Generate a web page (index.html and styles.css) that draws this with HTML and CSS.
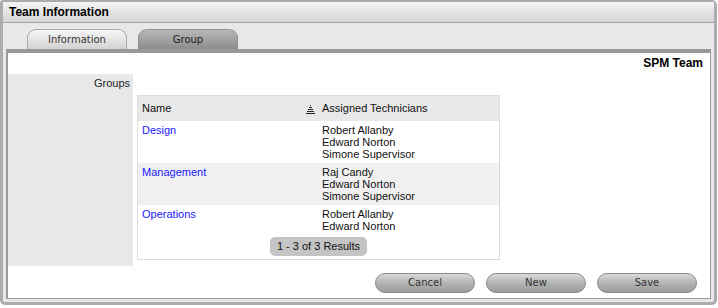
FILE: index.html
```html
<!DOCTYPE html>
<html>
<head>
<meta charset="utf-8">
<link rel="stylesheet" href="styles.css">
</head>
<body>
<div class="panel">
  <div class="panel-head">Team Information</div>
  <div class="panel-body">
    <div class="tabs">
      <div class="tab">Information</div>
      <div class="tab active">Group</div>
    </div>
    <div class="content">
      <div class="title-row">SPM Team</div>
      <div class="form">
        <div class="label-col">Groups</div>
        <div class="value-col">
          <table class="grid">
            <thead>
              <tr>
                <th class="c1"><span>Name</span>
                  <svg class="sort" width="9" height="10" viewBox="0 0 9 10"><g fill="#222"><rect x="4" y="1" width="1" height="1"/><rect x="3" y="3" width="3" height="1"/><rect x="2" y="5" width="5" height="1"/><rect x="1" y="7" width="7" height="1"/><rect x="0" y="9" width="9" height="1"/></g></svg>
                </th>
                <th class="c2">Assigned Technicians</th>
              </tr>
            </thead>
            <tbody>
              <tr>
                <td><a href="#">Design</a></td>
                <td>Robert Allanby<br>Edward Norton<br>Simone Supervisor</td>
              </tr>
              <tr class="alt">
                <td><a href="#">Management</a></td>
                <td>Raj Candy<br>Edward Norton<br>Simone Supervisor</td>
              </tr>
              <tr>
                <td><a href="#">Operations</a></td>
                <td>Robert Allanby<br>Edward Norton</td>
              </tr>
              <tr>
                <td colspan="2" class="pager-cell"><span class="pager">1 - 3 of 3 Results</span></td>
              </tr>
            </tbody>
          </table>
        </div>
      </div>
      <div class="buttons">
        <button class="btn">Cancel</button>
        <button class="btn">New</button>
        <button class="btn">Save</button>
      </div>
    </div>
  </div>
</div>
</body>
</html>
```
FILE: styles.css
```css
html, body {
  margin: 0;
  padding: 0;
  background: #ffffff;
}
body {
  font-family: "Liberation Sans", Arial, sans-serif;
  font-size: 11px;
  color: #111;
}
.panel {
  box-sizing: border-box;
  width: 717px;
  height: 305px;
  border: 3px solid #acacac;
  border-top-width: 2px;
  border-radius: 3px 5px 5px 5px;
  background: #e8e8e8;
  display: flex;
  flex-direction: column;
}
.panel-head {
  height: 20px;
  line-height: 20px;
  padding-left: 6px;
  font-weight: bold;
  font-size: 12px;
  color: #000;
  background: linear-gradient(#f4f4f4, #e4e4e4 50%, #d4d4d4);
  border-bottom: 1px solid #a4a4a4;
}
.panel-body {
  flex: 1;
  display: flex;
  flex-direction: column;
  padding: 0 3px 3px 3px;
}
.tabs {
  display: flex;
  gap: 11px;
  padding: 6px 0 0 21px;
  height: 20px;
}
.tab {
  box-sizing: border-box;
  width: 100px;
  height: 20px;
  border: 1px solid #a8a8a8;
  border-bottom: none;
  border-radius: 9px 9px 0 0;
  background: linear-gradient(#f6f6f6, #d2d2d2);
  font-family: "DejaVu Sans", Verdana, sans-serif;
  font-size: 10px;
  color: #333;
  text-align: center;
  line-height: 19px;
}
.tab.active {
  background: linear-gradient(#b8b8b8, #8c8c8c);
  border-color: #909090;
  color: #222;
}
.content {
  flex: 1;
  background: #fff;
  border: 1px solid #999;
  border-top: 4px solid #999;
  border-left-width: 2px;
  display: flex;
  flex-direction: column;
}
.title-row {
  height: 21px;
  line-height: 21px;
  text-align: right;
  padding-right: 7px;
  font-weight: bold;
  font-size: 12px;
  color: #000;
}
.form {
  display: flex;
}
.label-col {
  width: 122px;
  padding: 3px 3px 0 0;
  background: #e8e8e8;
  text-align: right;
  line-height: 13px;
  color: #222;
}
.value-col {
  padding: 21px 0 6px 4px;
}
.grid {
  border-collapse: collapse;
  width: 363px;
  border: 1px solid #dcdcdc;
}
.grid th {
  background: #e8e8e8;
  font-weight: normal;
  text-align: left;
  height: 25px;
  padding: 0 4px;
  color: #111;
  line-height: 13px;
}
.grid th.c1 {
  width: 172px;
  position: relative;
}
.sort {
  position: absolute;
  right: 3px;
  top: 8px;
}
.grid td {
  vertical-align: top;
  padding: 3px 4px;
  line-height: 12px;
  color: #111;
}
.grid tr.alt td {
  background: #f0f0f0;
}
.grid a {
  color: #1a1aff;
  text-decoration: none;
}
.grid td.pager-cell {
  text-align: center;
  padding: 2px 0 3px 0;
}
.pager {
  display: inline-block;
  background: #c4c4c4;
  border-radius: 5px;
  padding: 0 6px;
  height: 19px;
  line-height: 19px;
  color: #111;
  width: 85px;
}
.buttons {
  display: flex;
  justify-content: flex-end;
  gap: 11px;
  padding: 7px 13px 0 0;
}
.btn {
  box-sizing: border-box;
  width: 100px;
  height: 20px;
  border: 1px solid #8a8a8a;
  border-radius: 10px;
  background: linear-gradient(#dadada, #b4b4b4 50%, #9c9c9c);
  font-family: "DejaVu Sans", Verdana, sans-serif;
  font-size: 10px;
  color: #333;
  padding: 0;
  line-height: 18px;
}
```
